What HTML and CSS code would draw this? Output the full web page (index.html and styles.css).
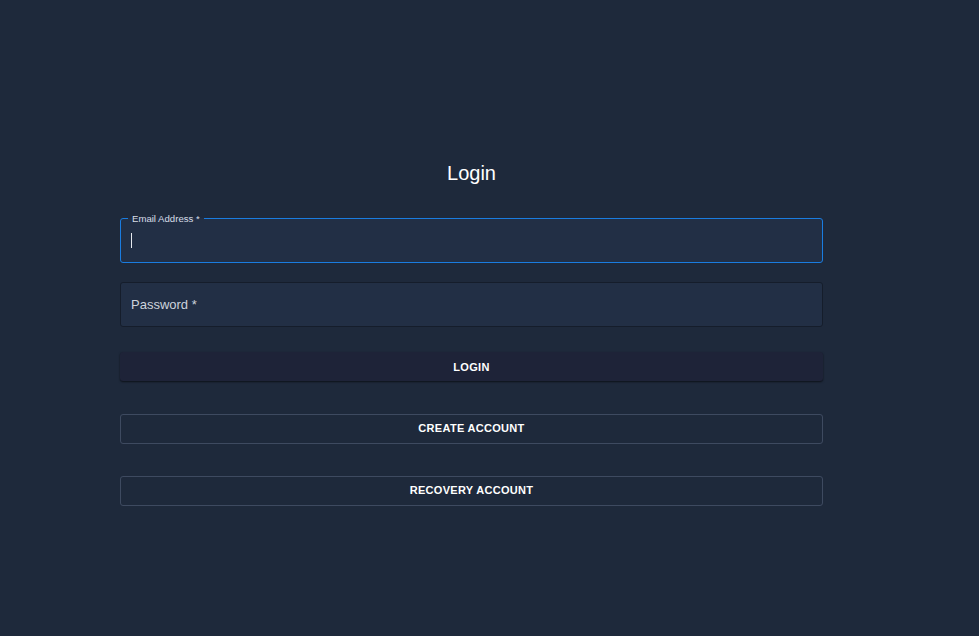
FILE: index.html
```html
<!DOCTYPE html>
<html>
<head>
<meta charset="utf-8">
<link rel="stylesheet" href="styles.css">
</head>
<body>
<main class="page">
  <section class="form">
    <h1 class="title">Login</h1>
    <div class="field focused">
      <span class="float-label">Email Address *</span>
      <span class="caret"></span>
    </div>
    <div class="field">
      <span class="placeholder">Password *</span>
    </div>
    <button class="btn btn-solid">LOGIN</button>
    <button class="btn btn-outline">CREATE ACCOUNT</button>
    <button class="btn btn-outline last">RECOVERY ACCOUNT</button>
  </section>
</main>
</body>
</html>
```

FILE: styles.css
```css
html, body {
  margin: 0;
  padding: 0;
  background: #1e293b;
  height: 100%;
}
body {
  font-family: "Liberation Sans", Arial, sans-serif;
  color: #ffffff;
}
.page {
  display: flex;
  padding: 0 0 0 120px;
}
.form {
  width: 703px;
  display: flex;
  flex-direction: column;
  padding-top: 161px;
}
.title {
  margin: 0;
  font-size: 20px;
  font-weight: 400;
  text-align: center;
  line-height: 24px;
  color: #ffffff;
}
.field {
  position: relative;
  height: 43px;
  border: 1px solid #151d2b;
  border-radius: 3px;
  background: #222f45;
  display: flex;
  align-items: center;
  padding-left: 10px;
  box-sizing: content-box;
  margin-top: 19px;
}
.field.focused {
  margin-top: 33px;
  border-color: #1a7ce0;
}
.float-label {
  position: absolute;
  left: 7px;
  top: -6px;
  padding: 0 4px;
  font-size: 9.6px;
  line-height: 11px;
  color: #d7dde6;
  background: linear-gradient(#1e293b 0 50%, #222f45 50% 100%);
}
.caret {
  width: 1px;
  height: 15px;
  background: #e6e9ee;
}
.placeholder {
  font-size: 13px;
  color: #cdd3dc;
}
.btn {
  font-family: "Liberation Sans", Arial, sans-serif;
  font-weight: 700;
  font-size: 11px;
  letter-spacing: 0.3px;
  color: #ffffff;
  height: 29px;
  border-radius: 3px;
  cursor: pointer;
}
.btn-solid {
  margin-top: 25px;
  background: #1e2338;
  border: none;
  box-shadow: 0 1px 2px rgba(0, 0, 0, 0.6);
}
.btn-outline {
  background: transparent;
  border: 1px solid #3e4a60;
  height: 30px;
  padding: 0 0 2px;
  margin-top: 33px;
}
.btn-outline.last {
  margin-top: 32px;
}
```
